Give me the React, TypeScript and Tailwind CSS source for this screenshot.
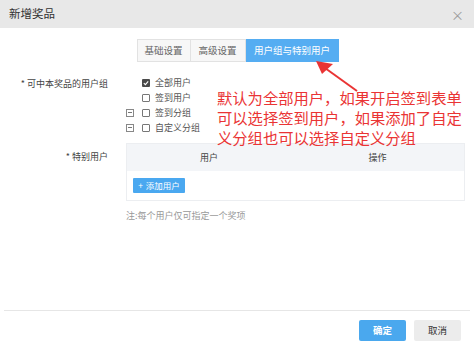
import React from "react";

const font = { fontFamily: '"Noto Sans CJK SC", "Noto Sans", sans-serif' };

function Box({ checked }: { checked?: boolean }) {
  if (checked) {
    return (
      <span className="flex h-[8px] w-[8px] items-center justify-center rounded-[1px] bg-[#4a4a4a]">
        <svg width="6" height="6" viewBox="0 0 6 6">
          <path d="M0.8 3.1 L2.4 4.6 L5.2 1.3" fill="none" stroke="#fff" strokeWidth="1.1" />
        </svg>
      </span>
    );
  }
  return <span className="h-[8px] w-[8px] rounded-[1px] border border-[#777] bg-white" />;
}

function Minus() {
  return (
    <span className="flex h-[8px] w-[8px] items-center justify-center border border-[#888]">
      <span className="h-px w-[4px] bg-[#777]" />
    </span>
  );
}

const groups = [
  { label: "全部用户", checked: true, tree: false },
  { label: "签到用户", checked: false, tree: false },
  { label: "签到分组", checked: false, tree: true },
  { label: "自定义分组", checked: false, tree: true },
];

export default function App() {
  return (
    <div style={font} className="relative flex h-[347px] w-[474px] flex-col overflow-hidden bg-white text-[9px] text-[#555]">
      <header className="flex h-[28px] items-center justify-between bg-[#e8e8e8] pl-[9px] pr-[10px]">
        <span className="text-[11.5px] text-[#333]">新增奖品</span>
        <span className="text-[13px] leading-none text-[#9a9a9a]">×</span>
      </header>

      <div className="mt-[11px] flex justify-center pl-[1px]">
        <div className="flex h-[23px] text-[9.5px]">
          <span className="flex w-[54px] items-center justify-center border border-[#e2e2e2] bg-[#f7f7f7] text-[#666]">基础设置</span>
          <span className="flex w-[55px] items-center justify-center border-y border-r border-[#e2e2e2] bg-[#f7f7f7] text-[#666]">高级设置</span>
          <span className="flex w-[93px] items-center justify-center bg-[#55adf2] text-white">用户组与特别用户</span>
        </div>
      </div>

      <div className="mt-[13px] flex">
        <div className="w-[108px] pt-[1px] text-right leading-[15px] text-[#444]">* 可中本奖品的用户组</div>
        <ul className="ml-[18px] flex flex-col">
          {groups.map((g) => (
            <li key={g.label} className="flex h-[15px] items-center">
              <span className="flex w-[16px]">{g.tree ? <Minus /> : null}</span>
              <Box checked={g.checked} />
              <span className="ml-[5px] text-[#555]">{g.label}</span>
            </li>
          ))}
        </ul>
      </div>

      <div className="mt-[8px] flex">
        <div className="flex h-[27px] w-[108px] items-center justify-end text-[#444]">* 特别用户</div>
        <div className="ml-[18px] w-[339px]">
          <div className="border border-[#eceef1]">
            <div className="grid h-[27px] grid-cols-[164px_1fr] items-center bg-[#f3f5f8] text-[#444]">
              <span className="text-center">用户</span>
              <span className="text-center">操作</span>
            </div>
            <div className="flex h-[29px] items-center px-[6px]">
              <button className="flex h-[15px] w-[52px] items-center justify-center gap-[3px] rounded-[1px] bg-[#4aa8f0] text-[8.5px] text-white">
                <span>+</span>
                <span>添加用户</span>
              </button>
            </div>
          </div>
          <p className="mt-[8px] text-[#999]">注:每个用户仅可指定一个奖项</p>
        </div>
      </div>

      <div className="flex-1" />

      <footer className="mx-[4px] flex justify-end gap-[8px] border-t border-[#e6e6e6] pb-[6px] pr-[9px] pt-[9px] text-[9.5px]">
        <button className="h-[21px] w-[47px] rounded-[2px] bg-[#4aa8ee] font-bold text-white">确定</button>
        <button className="h-[21px] w-[47px] rounded-[2px] bg-[#ececec] text-[#333]">取消</button>
      </footer>

      <p className="absolute left-[217px] top-[87px] w-[250px] text-[15.3px] leading-[20px] text-[#ea3434]">
        默认为全部用户，如果开启签到表单可以选择签到用户，如果添加了自定义分组也可以选择自定义分组
      </p>

      <svg className="absolute left-0 top-0" width="474" height="347" viewBox="0 0 474 347">
        <line x1="357" y1="91" x2="325" y2="68" stroke="#ea3434" strokeWidth="2" />
        <polygon points="316,61 333,64 322,74" fill="#ea3434" />
      </svg>
    </div>
  );
}
